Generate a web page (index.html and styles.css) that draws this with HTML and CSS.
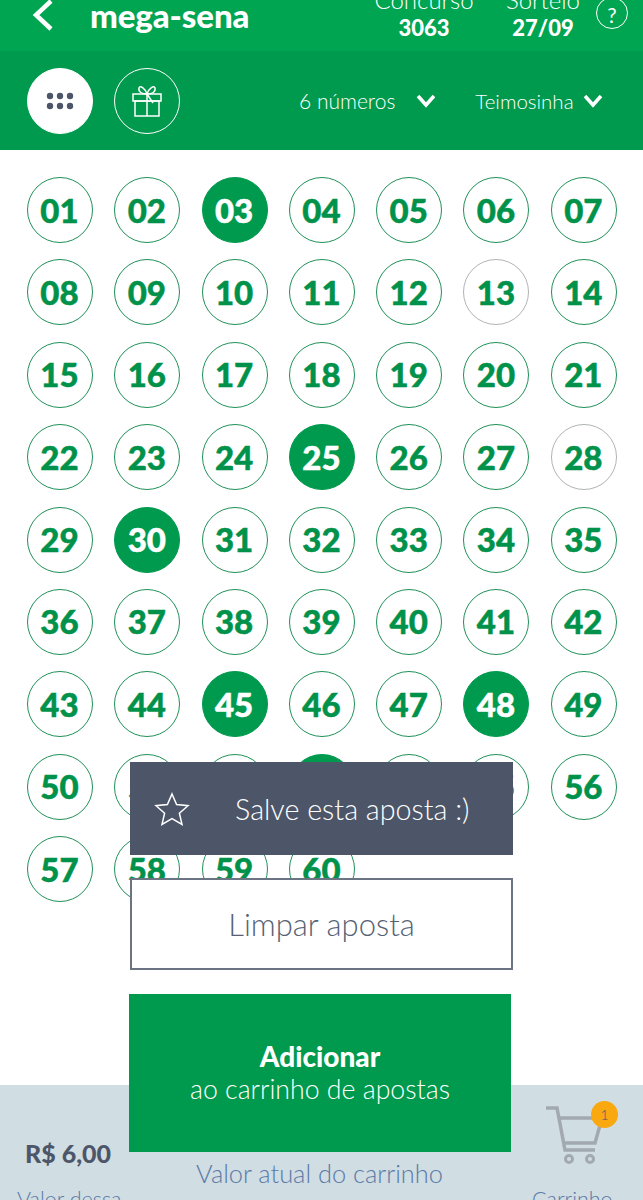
FILE: index.html
```html
<!DOCTYPE html>
<html lang="pt-BR">
<head>
  <meta charset="UTF-8" />
  <meta name="viewport" content="width=device-width, initial-scale=1.0"/>
  <title>mega-sena</title>
  <link rel="stylesheet" href="styles.css">
</head>
<body>

<div class="page">

  <header class="top-bar">
    <svg class="back-icon" width="24" height="36" viewBox="0 0 24 36"><path d="M20 2 L5 16 L20 30" fill="none" stroke="#fff" stroke-width="4.5"/></svg>
    <h1 class="game-name">mega-sena</h1>
    <div class="draw-info draw-contest">
      <span class="draw-label">Concurso</span>
      <strong>3063</strong>
    </div>
    <div class="draw-info draw-date">
      <span class="draw-label">Sorteio</span>
      <strong>27/09</strong>
    </div>
    <div class="help-icon">?</div>
  </header>

  <div class="options-bar">
    <div class="round-btn round-btn-active">
      <svg width="28" height="18" viewBox="0 0 28 18" fill="#4d5669">
        <circle cx="4" cy="4" r="3.2"/><circle cx="14" cy="4" r="3.2"/><circle cx="24" cy="4" r="3.2"/>
        <circle cx="4" cy="14" r="3.2"/><circle cx="14" cy="14" r="3.2"/><circle cx="24" cy="14" r="3.2"/>
      </svg>
    </div>
    <div class="round-btn">
      <svg width="32" height="32" viewBox="0 0 32 32" fill="none" stroke="#fff" stroke-width="1.5">
        <rect x="2" y="9" width="28" height="7"/>
        <rect x="4" y="16" width="24" height="15"/>
        <path d="M16 9 V31"/>
        <path d="M16 9 C11 9 7 7 8 3 C9 0 14 3 16 9 C18 3 23 0 24 3 C25 7 21 9 16 9 Z"/>
        <path d="M16 9 L22 18"/>
      </svg>
    </div>
    <div class="select-option select-numbers">
      <span>6 números</span>
      <svg width="20" height="14" viewBox="0 0 20 14"><path d="M2 2 L10 11 L18 2" fill="none" stroke="#fff" stroke-width="3.5"/></svg>
    </div>
    <div class="select-option select-repeat">
      <span>Teimosinha</span>
      <svg width="20" height="14" viewBox="0 0 20 14"><path d="M2 2 L10 11 L18 2" fill="none" stroke="#fff" stroke-width="3.5"/></svg>
    </div>
  </div>

  <div class="numbers">
    <span class="num">01</span><span class="num">02</span><span class="num selected">03</span><span class="num">04</span><span class="num">05</span><span class="num">06</span><span class="num">07</span>
    <span class="num">08</span><span class="num">09</span><span class="num">10</span><span class="num">11</span><span class="num">12</span><span class="num unavailable">13</span><span class="num">14</span>
    <span class="num">15</span><span class="num">16</span><span class="num">17</span><span class="num">18</span><span class="num">19</span><span class="num">20</span><span class="num">21</span>
    <span class="num">22</span><span class="num">23</span><span class="num">24</span><span class="num selected">25</span><span class="num">26</span><span class="num">27</span><span class="num unavailable">28</span>
    <span class="num">29</span><span class="num selected">30</span><span class="num">31</span><span class="num">32</span><span class="num">33</span><span class="num">34</span><span class="num">35</span>
    <span class="num">36</span><span class="num">37</span><span class="num">38</span><span class="num">39</span><span class="num">40</span><span class="num">41</span><span class="num">42</span>
    <span class="num">43</span><span class="num">44</span><span class="num selected">45</span><span class="num">46</span><span class="num">47</span><span class="num selected">48</span><span class="num">49</span>
    <span class="num">50</span><span class="num">51</span><span class="num">52</span><span class="num selected">53</span><span class="num">54</span><span class="num">55</span><span class="num">56</span>
    <span class="num">57</span><span class="num">58</span><span class="num">59</span><span class="num">60</span>
  </div>

  <div class="actions">
    <div class="action action-save">
      <svg class="star-icon" width="36" height="34" viewBox="0 0 36 34"><path d="M18 2 L22.6 12.6 L34 13.7 L25.4 21.2 L28 32.4 L18 26.5 L8 32.4 L10.6 21.2 L2 13.7 L13.4 12.6 Z" fill="none" stroke="#fff" stroke-width="1.5"/></svg>
      <span>Salve esta aposta :)</span>
    </div>
    <div class="action action-clear">Limpar aposta</div>
    <div class="action action-add">
      <strong>Adicionar</strong>
      <span>ao carrinho de apostas</span>
    </div>
  </div>

  <footer class="summary">
    <div class="summary-bet">
      <strong>R$ 6,00</strong>
      <span>Valor dessa</span>
    </div>
    <div class="summary-total">
      <span>Valor atual do carrinho</span>
      <span>R$ 6,00</span>
    </div>
    <div class="summary-cart">
      <div class="cart-icon">
        <svg width="62" height="62" viewBox="0 0 62 62" fill="none" stroke="#a3a9b1" stroke-width="3.5">
          <path d="M1 3 H12 L20 45 H50"/>
          <path d="M15 13 H57 L50 38 H19"/>
          <circle cx="24" cy="54" r="3.5" stroke-width="3"/>
          <circle cx="45" cy="54" r="3.5" stroke-width="3"/>
        </svg>
        <span class="cart-badge">1</span>
      </div>
      <span>Carrinho</span>
    </div>
  </footer>

</div>

</body>
</html>
```

FILE: styles.css
```css
body {
  margin: 0;
  font-family: 'Lato', 'Open Sans', sans-serif;
  background-color: #fff;
}

.page {
  position: relative;
  height: 1200px;
  overflow: hidden;
}

/* top green bars */
.top-bar {
  display: flex;
  align-items: flex-start;
  height: 51px;
  background-color: #00a552;
  color: #fff;
  overflow: hidden;
}

.back-icon {
  margin: -1px 0 0 31px;
  flex: none;
}

.game-name {
  margin: -3px 0 0 35px;
  width: 285px;
  font-size: 33px;
  font-weight: 900;
  line-height: 36px;
  letter-spacing: -0.1px;
}

.draw-info {
  display: flex;
  flex-direction: column;
  align-items: center;
  margin-top: -13px;
  font-size: 24px;
  line-height: 26px;
}

.draw-info strong {
  margin-top: 2px;
  font-size: 22px;
  font-weight: 900;
}

.draw-label {
  font-weight: 300;
}

.draw-contest {
  width: 98px;
}

.draw-date {
  width: 92px;
  margin-left: 24px;
}

.help-icon {
  box-sizing: border-box;
  width: 32px;
  height: 32px;
  margin: -3px 0 0 7px;
  border: 1.5px solid #fff;
  border-radius: 50%;
  font-size: 21px;
  line-height: 33px;
  text-align: center;
}

.options-bar {
  display: flex;
  align-items: center;
  height: 99px;
  padding-left: 27px;
  background-color: #009a4e;
  color: #fff;
}

.round-btn {
  display: flex;
  align-items: center;
  justify-content: center;
  box-sizing: border-box;
  width: 66px;
  height: 66px;
  margin-right: 21px;
  border: 1.5px solid #fff;
  border-radius: 50%;
}

.round-btn-active {
  background-color: #fff;
}

.select-option {
  display: flex;
  align-items: center;
  font-size: 21px;
  font-weight: 300;
}

.select-numbers {
  margin-left: 98px;
  gap: 21px;
}

.select-repeat {
  margin-left: 39px;
  font-size: 20.5px;
  gap: 9px;
}

/* number grid */
.numbers {
  display: grid;
  grid-template-columns: repeat(7, 66px);
  column-gap: 21.3px;
  row-gap: 16.4px;
  padding: 27px 0 0 27px;
}

.num {
  display: flex;
  align-items: center;
  justify-content: center;
  box-sizing: border-box;
  height: 66px;
  padding: 0 1px 1px 0;
  border: 1.6px solid #1f9058;
  border-radius: 50%;
  color: #00924a;
  font-size: 33px;
  font-weight: 900;
  -webkit-text-stroke: 0.5px #00924a;
}

.num.selected {
  background-color: #009a4e;
  border-color: #009a4e;
  color: #fff;
  -webkit-text-stroke: 0.5px #fff;
}

.num.unavailable {
  border-color: #b0b3b5;
}

/* buttons lying over the grid */
.actions {
  position: absolute;
  top: 762px;
  left: 130px;
  width: 383px;
  display: flex;
  flex-direction: column;
  gap: 23px;
  z-index: 2;
}

.action {
  display: flex;
  align-items: center;
  justify-content: center;
  box-sizing: border-box;
  font-weight: 300;
}

.action-save {
  position: relative;
  height: 93px;
  justify-content: flex-start;
  background-color: #4d5669;
  color: #fff;
  font-size: 28.7px;
  padding-left: 105px;
}

.star-icon {
  position: absolute;
  left: 24px;
  top: 30px;
}

.action-clear {
  height: 92px;
  border: 2px solid #6b7483;
  background-color: #fff;
  color: #566274;
  font-size: 31px;
}

.action-add {
  flex-direction: column;
  height: 158px;
  width: 382px;
  margin: 1px 0 0 -1px;
  background-color: #009a4e;
  color: #fff;
  font-size: 26.7px;
  line-height: 33px;
}

.action-add strong {
  font-size: 28px;
  font-weight: 900;
}

/* bottom summary */
.summary {
  position: absolute;
  left: 0;
  right: 0;
  bottom: 0;
  display: flex;
  height: 115px;
  background-color: #d0dde2;
  color: #5a7aa8;
  font-size: 25.4px;
  font-weight: 300;
  white-space: nowrap;
}

.summary-bet {
  display: flex;
  flex-direction: column;
  flex: none;
  width: 196px;
  padding: 52px 0 0 17px;
  box-sizing: border-box;
  font-size: 21.5px;
  line-height: 32px;
}

.summary-bet strong {
  margin: 0 0 14px 8px;
  color: #4d5669;
  font-size: 25px;
  font-weight: 900;
}

.summary-total {
  display: flex;
  flex-direction: column;
  align-items: center;
  flex: none;
  gap: 6px;
  width: 247px;
  padding-top: 72px;
  line-height: 32px;
}

.summary-cart {
  display: flex;
  flex-direction: column;
  margin-left: 89px;
  font-size: 21.5px;
  line-height: 32px;
}

.cart-icon {
  position: relative;
  width: 62px;
  height: 62px;
  margin: 20px 0 16px 13px;
}

.cart-badge {
  position: absolute;
  top: -4px;
  left: 46px;
  width: 27px;
  height: 27px;
  border-radius: 50%;
  background-color: #f9a80f;
  color: #4d5669;
  font-size: 14px;
  line-height: 27px;
  text-align: center;
}
```
